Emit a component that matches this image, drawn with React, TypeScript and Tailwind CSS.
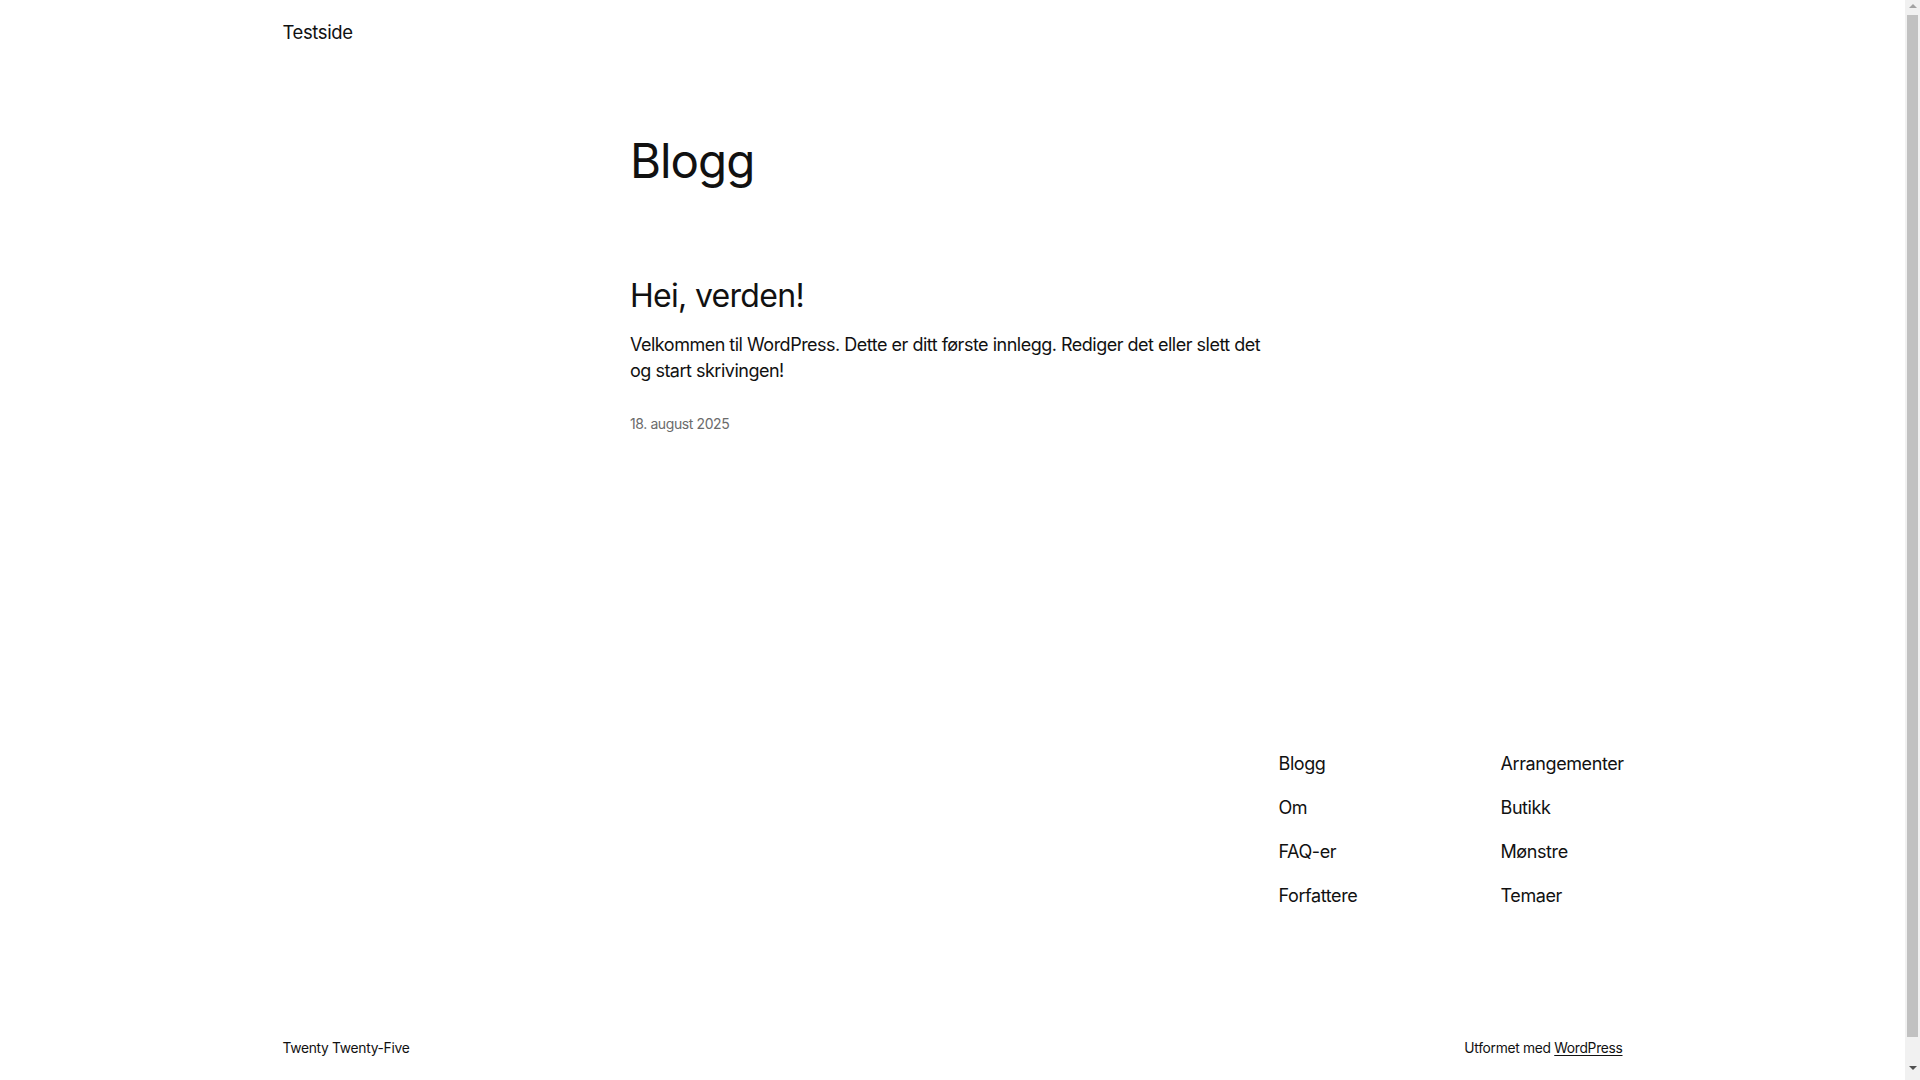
const navLeft = ["Blogg", "Om", "FAQ-er", "Forfattere"];
const navRight = ["Arrangementer", "Butikk", "Mønstre", "Temaer"];

export default function App() {
  return (
    <div className="min-h-[1110px] bg-white pr-[15px] text-[#111111] font-['Inter',sans-serif]">
      <header className="mx-auto flex h-[64px] max-w-[1340px] items-center">
        <a href="#" className="text-[18.5px] leading-none tracking-[-0.4px]">
          Testside
        </a>
      </header>

      <main className="mx-auto w-[645px]">
        <h1 className="mt-[68px] text-[47.5px] leading-[1.2] tracking-[-1px]">Blogg</h1>

        <article className="mt-[88px]">
          <h2 className="text-[32px] leading-[1.2] tracking-[-0.7px]">
            <a href="#">Hei, verden!</a>
          </h2>
          <p className="mt-[17px] text-[18px] leading-[26px] tracking-[-0.5px]">
            Velkommen til WordPress. Dette er ditt første innlegg. Rediger det eller slett det og start skrivingen!
          </p>
          <div className="mt-[30px] text-[14px] leading-[20px] tracking-[-0.4px] text-[#6b6b6b]">
            18. august 2025
          </div>
        </article>
      </main>

      <footer className="mx-auto mt-[317px] max-w-[1340px]">
        <nav className="flex justify-end text-[18px] leading-[26px] tracking-[-0.4px]">
          <ul className="flex w-[222px] flex-col gap-[18px]">
            {navLeft.map((item) => (
              <li key={item}>
                <a href="#">{item}</a>
              </li>
            ))}
          </ul>
          <ul className="flex w-[122px] flex-col gap-[18px] whitespace-nowrap">
            {navRight.map((item) => (
              <li key={item}>
                <a href="#">{item}</a>
              </li>
            ))}
          </ul>
        </nav>

        <div className="mt-[129px] flex items-center justify-between text-[13.8px] leading-[20px] tracking-[-0.3px]">
          <span>Twenty Twenty-Five</span>
          <span>
            Utformet med{" "}
            <a href="#" className="underline underline-offset-2">
              WordPress
            </a>
          </span>
        </div>
      </footer>

      {/* browser scrollbar as seen in the screenshot */}
      <div className="fixed right-0 top-0 flex h-[1080px] w-[15px] flex-col items-center bg-[#f1f1f1]">
        <div className="mt-[4px] h-0 w-0 border-x-[4px] border-b-[4px] border-x-transparent border-b-[#a3a3a3]" />
        <div className="mt-[7px] h-[1022px] w-[11px] bg-[#c1c1c1]" />
        <div className="mt-[29px] h-0 w-0 border-x-[4px] border-t-[4px] border-x-transparent border-t-[#505050]" />
      </div>
    </div>
  );
}
